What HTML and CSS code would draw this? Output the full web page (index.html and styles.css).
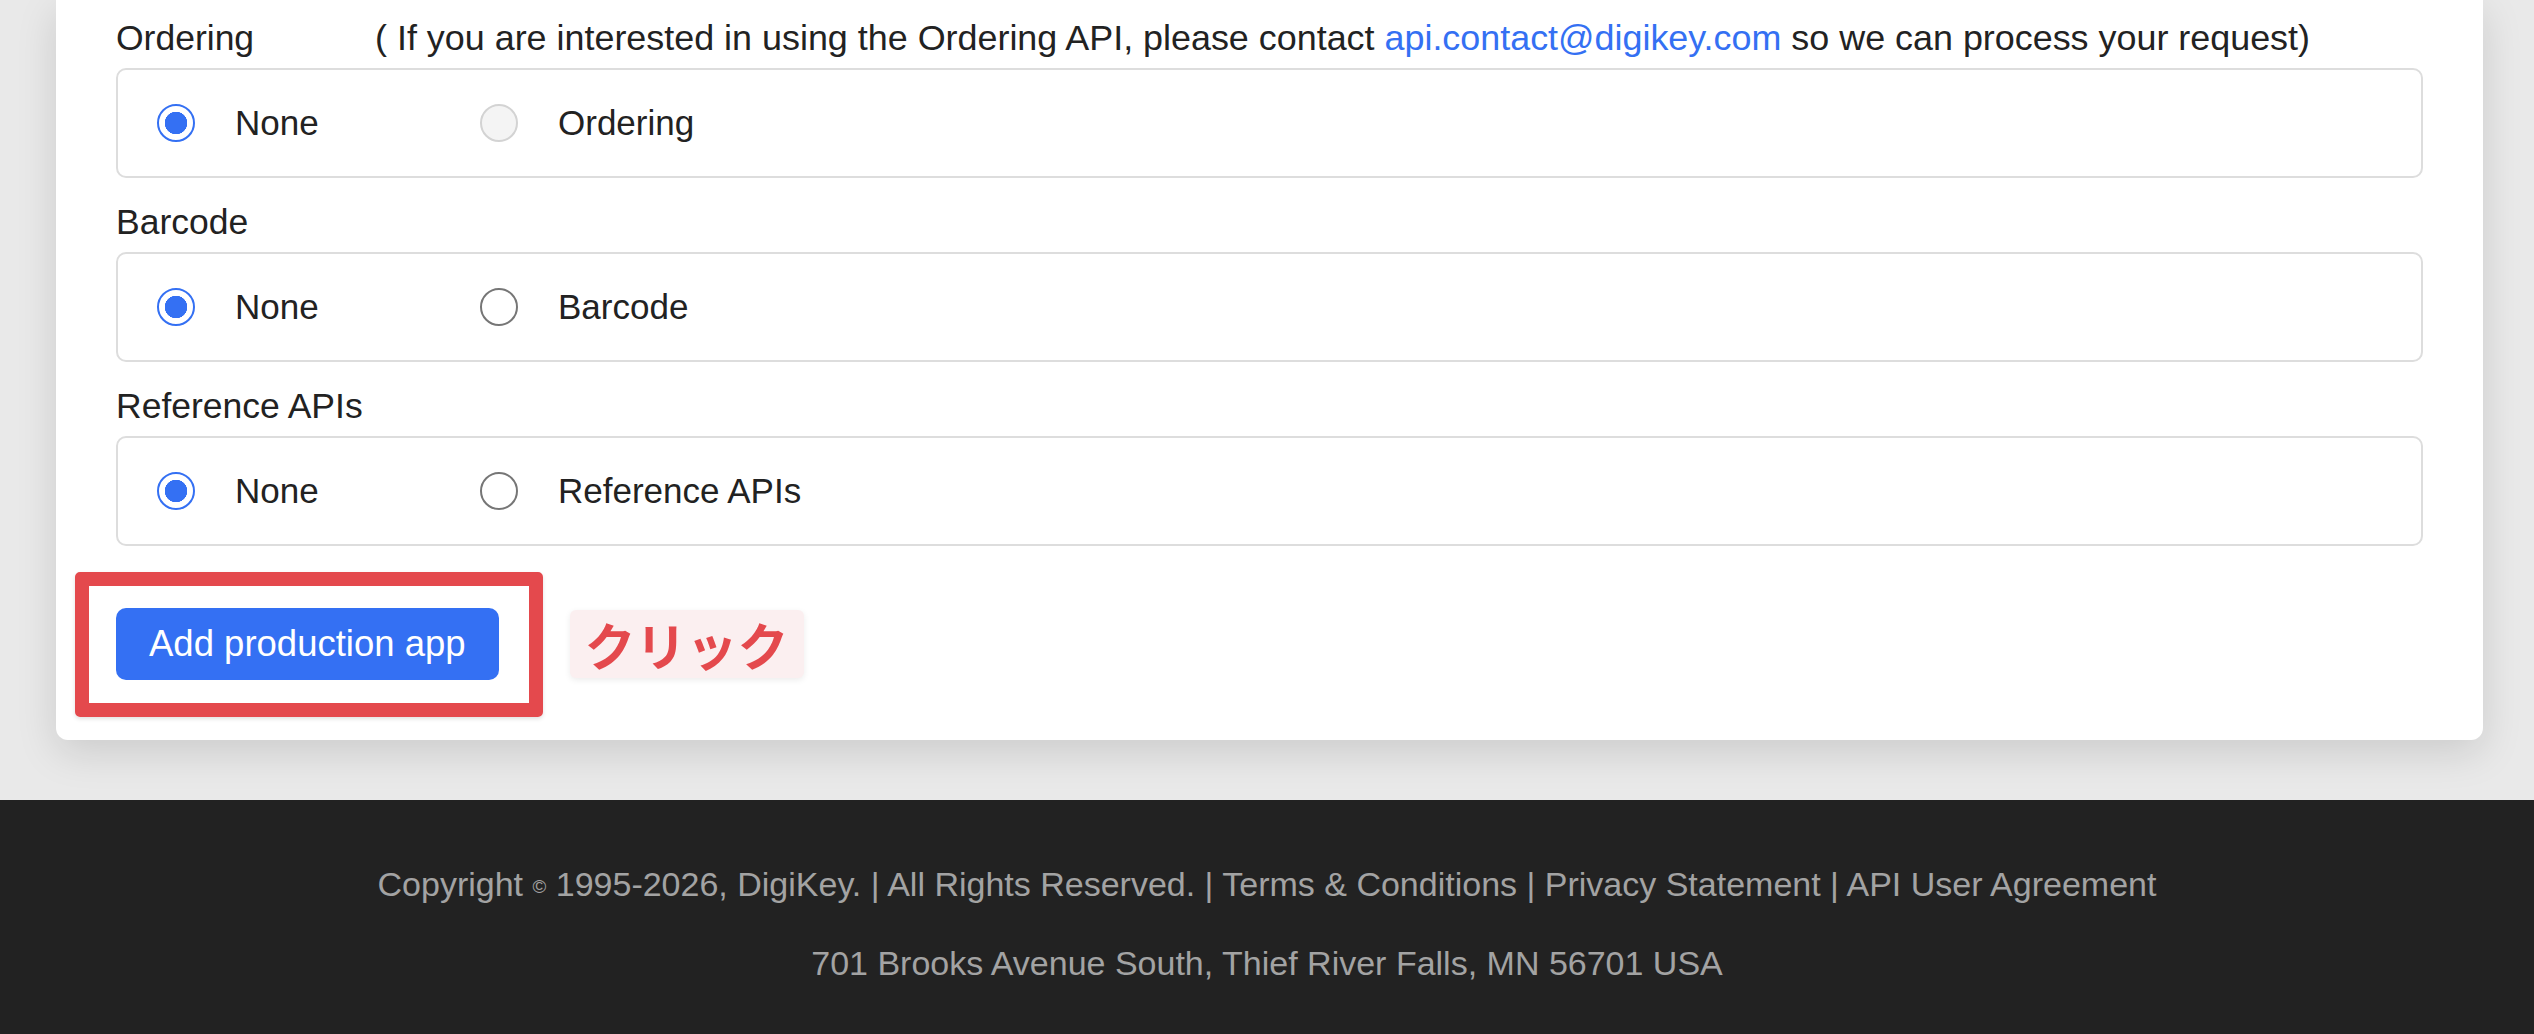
FILE: index.html
```html
<!DOCTYPE html>
<html lang="en">
<head>
<meta charset="utf-8">
<title>Add production app</title>
<link rel="stylesheet" href="styles.css">
</head>
<body>
<main class="page">
  <section class="card">
    <div class="group">
      <div class="label"><span class="label-name">Ordering</span><span class="note">( If you are interested in using the Ordering API, please contact <a class="link" href="#">api.contact@digikey.com</a> so we can process your request)</span></div>
      <div class="box">
        <label class="option"><input class="radio" type="radio" name="ordering" checked><span>None</span></label>
        <label class="option"><input class="radio" type="radio" name="ordering" disabled><span>Ordering</span></label>
      </div>
    </div>
    <div class="group">
      <div class="label">Barcode</div>
      <div class="box">
        <label class="option"><input class="radio" type="radio" name="barcode" checked><span>None</span></label>
        <label class="option"><input class="radio" type="radio" name="barcode"><span>Barcode</span></label>
      </div>
    </div>
    <div class="group">
      <div class="label">Reference APIs</div>
      <div class="box">
        <label class="option"><input class="radio" type="radio" name="reference" checked><span>None</span></label>
        <label class="option"><input class="radio" type="radio" name="reference"><span>Reference APIs</span></label>
      </div>
    </div>
    <div class="actions">
      <div class="btn-wrap">
        <button class="btn" type="button">Add production app</button>
        <div class="highlight"></div>
      </div>
      <div class="callout">クリック</div>
    </div>
  </section>
</main>
<footer class="footer">
  <p>Copyright <small class="copy">©</small> 1995-2026, DigiKey. | All Rights Reserved. | Terms &amp; Conditions | Privacy Statement | API User Agreement</p>
  <p>701 Brooks Avenue South, Thief River Falls, MN 56701 USA</p>
</footer>
</body>
</html>
```

FILE: styles.css
```css
* { box-sizing: border-box; }

html, body {
  margin: 0;
  padding: 0;
}

body {
  background: #e9e9e9;
  font-family: "Liberation Sans", Arial, "Noto Sans CJK JP", sans-serif;
  color: #222222;
  overflow: hidden;
}

.page {
  padding: 0 51px 60px 56px;
}

.card {
  background: #ffffff;
  border-radius: 0 0 12px 12px;
  box-shadow: 0 12px 40px rgba(0, 0, 0, 0.13);
  padding: 16px 60px 60px 60px;
}

.group + .group {
  margin-top: 22px;
}

.label {
  font-size: 35.5px;
  line-height: 44px;
  margin-bottom: 8px;
  white-space: nowrap;
}

.note {
  font-size: 35.9px;
}

.label-name {
  display: inline-block;
  width: 259px;
}

.link {
  color: #3470f3;
  text-decoration: none;
}

.box {
  height: 110px;
  border: 2px solid #dddddd;
  border-radius: 10px;
  display: flex;
  align-items: center;
  padding: 0 39px;
}

.option {
  display: flex;
  align-items: center;
  gap: 40px;
  min-width: 323px;
  font-size: 35px;
  line-height: 44px;
}

.radio {
  appearance: none;
  -webkit-appearance: none;
  margin: 0;
  width: 38px;
  height: 38px;
  border-radius: 50%;
  border: 2px solid #767676;
  background: #ffffff;
  flex: none;
}

.radio:checked {
  border: 2px solid #3470f3;
  background: radial-gradient(circle, #3470f3 0 11px, #ffffff 11.5px);
}

.radio:disabled {
  border-color: #d3d3d3;
  background: #f4f4f4;
}

.actions {
  margin-top: 62px;
  display: flex;
  align-items: center;
}

.btn-wrap {
  position: relative;
}

.btn {
  display: block;
  background: #3470f3;
  color: #ffffff;
  border: none;
  border-radius: 10px;
  font-family: inherit;
  font-size: 36.5px;
  line-height: 40px;
  padding: 16px 33px;
}

.highlight {
  position: absolute;
  left: -41px;
  top: -36px;
  right: -44px;
  bottom: -37px;
  border: 14px solid #e4494d;
  border-radius: 5px;
  box-shadow: 0 2px 4px rgba(0, 0, 0, 0.12);
  pointer-events: none;
}

.callout {
  margin-left: 71px;
  background: #fbeff0;
  color: #e4494d;
  font-family: "Noto Sans CJK JP", sans-serif;
  font-weight: 700;
  font-size: 51px;
  line-height: 68px;
  padding: 0 15px;
  border-radius: 6px;
  box-shadow: 0 2px 6px rgba(0, 0, 0, 0.08);
}

.footer {
  background: #222222;
  color: #a3a3a3;
  text-align: center;
  font-size: 34px;
  line-height: 48px;
  min-height: 234px;
  padding: 60px 0 0;
}

.footer p {
  margin: 0 0 28px;
}

.footer p:last-child {
  margin-bottom: 0;
}

.copy {
  font-size: 55%;
  vertical-align: 3px;
}
```
